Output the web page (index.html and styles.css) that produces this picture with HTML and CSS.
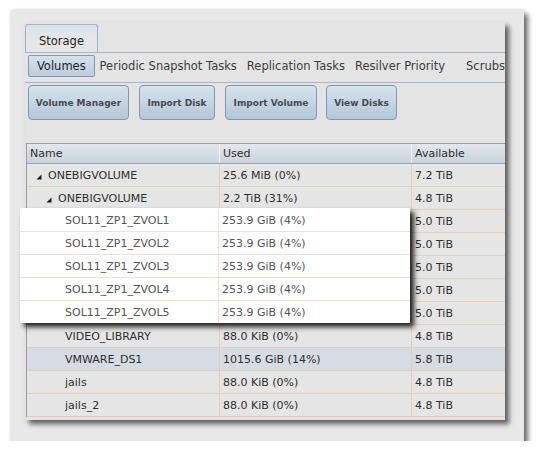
FILE: index.html
```html
<!DOCTYPE html>
<html>
<head>
<meta charset="utf-8">
<link rel="stylesheet" href="styles.css">
</head>
<body>
<div class="frame">
  <div class="panel">
    <div class="tabs"><div class="tab">Storage</div></div>
    <div class="subtabs">
      <div class="vol-btn">Volumes</div>
      <div class="sublink first">Periodic Snapshot Tasks</div>
      <div class="sublink">Replication Tasks</div>
      <div class="sublink">Resilver Priority</div>
      <div class="sublink last">Scrubs</div>
    </div>
    <div class="actions">
      <div class="abtn b-vm">Volume Manager</div>
      <div class="abtn b-id">Import Disk</div>
      <div class="abtn b-iv">Import Volume</div>
      <div class="abtn b-vd">View Disks</div>
    </div>
    <div class="table">
      <div class="row head">
        <div class="cell name">Name</div>
        <div class="cell">Used</div>
        <div class="cell">Available</div>
      </div>
      <div class="row">
        <div class="cell name l1"><svg class="tri" width="6" height="6" viewBox="0 0 6 6"><polygon points="5.5,0.5 5.5,5.5 0.5,5.5"/></svg>ONEBIGVOLUME</div>
        <div class="cell">25.6 MiB (0%)</div>
        <div class="cell">7.2 TiB</div>
      </div>
      <div class="row">
        <div class="cell name l2"><svg class="tri" width="6" height="6" viewBox="0 0 6 6"><polygon points="5.5,0.5 5.5,5.5 0.5,5.5"/></svg>ONEBIGVOLUME</div>
        <div class="cell">2.2 TiB (31%)</div>
        <div class="cell">4.8 TiB</div>
      </div>
      <div class="row">
        <div class="cell name l3">SOL11_ZP1_ZVOL1</div>
        <div class="cell">253.9 GiB (4%)</div>
        <div class="cell">5.0 TiB</div>
      </div>
      <div class="row">
        <div class="cell name l3">SOL11_ZP1_ZVOL2</div>
        <div class="cell">253.9 GiB (4%)</div>
        <div class="cell">5.0 TiB</div>
      </div>
      <div class="row">
        <div class="cell name l3">SOL11_ZP1_ZVOL3</div>
        <div class="cell">253.9 GiB (4%)</div>
        <div class="cell">5.0 TiB</div>
      </div>
      <div class="row">
        <div class="cell name l3">SOL11_ZP1_ZVOL4</div>
        <div class="cell">253.9 GiB (4%)</div>
        <div class="cell">5.0 TiB</div>
      </div>
      <div class="row">
        <div class="cell name l3">SOL11_ZP1_ZVOL5</div>
        <div class="cell">253.9 GiB (4%)</div>
        <div class="cell">5.0 TiB</div>
      </div>
      <div class="row">
        <div class="cell name l3">VIDEO_LIBRARY</div>
        <div class="cell">88.0 KiB (0%)</div>
        <div class="cell">4.8 TiB</div>
      </div>
      <div class="row selected">
        <div class="cell name l3">VMWARE_DS1</div>
        <div class="cell">1015.6 GiB (14%)</div>
        <div class="cell">5.8 TiB</div>
      </div>
      <div class="row">
        <div class="cell name l3">jails</div>
        <div class="cell">88.0 KiB (0%)</div>
        <div class="cell">4.8 TiB</div>
      </div>
      <div class="row">
        <div class="cell name l3">jails_2</div>
        <div class="cell">88.0 KiB (0%)</div>
        <div class="cell">4.8 TiB</div>
      </div>
    </div>
  </div>
  <div class="popup">
    <div class="prow"><div class="pcell pname">SOL11_ZP1_ZVOL1</div><div class="pcell">253.9 GiB (4%)</div></div>
    <div class="prow"><div class="pcell pname">SOL11_ZP1_ZVOL2</div><div class="pcell">253.9 GiB (4%)</div></div>
    <div class="prow"><div class="pcell pname">SOL11_ZP1_ZVOL3</div><div class="pcell">253.9 GiB (4%)</div></div>
    <div class="prow"><div class="pcell pname">SOL11_ZP1_ZVOL4</div><div class="pcell">253.9 GiB (4%)</div></div>
    <div class="prow"><div class="pcell pname">SOL11_ZP1_ZVOL5</div><div class="pcell">253.9 GiB (4%)</div></div>
  </div>
</div>
</body>
</html>
```
FILE: styles.css
```css
* { box-sizing: border-box; }
body {
  margin: 0;
  background: #ffffff;
  font-family: "DejaVu Sans", sans-serif;
  font-size: 11px;
  color: #2e2e2e;
}
.frame {
  position: relative;
  margin: 10px 0 0 11px;
  width: 513px;
  height: 431px;
  background: #e8e8e8;
  box-shadow: 4px 4px 5px rgba(0,0,0,0.55), 0 0 3px rgba(0,0,0,0.18);
  padding: 12px 0 0 14px;
}
.panel {
  width: 480px;
  height: 398px;
  background: #e4e4e4;
  box-shadow: 4px 4px 5px rgba(0,0,0,0.6);
  display: flex;
  flex-direction: column;
  overflow: hidden;
}
.tabs {
  height: 30px;
  padding-top: 2px;
  display: flex;
}
.tab {
  width: 73px;
  height: 28px;
  border: 1px solid #a6b3c0;
  border-bottom: none;
  border-radius: 3px 3px 0 0;
  background: linear-gradient(#d9e2ea, #e6e6e6 45%);
  text-align: center;
  padding-top: 9px;
  line-height: 14px;
  font-size: 11.5px;
  color: #1e1e1e;
}
.subtabs {
  height: 31px;
  border-top: 1px solid #a9b5c1;
  border-bottom: 1px solid #a9b5c1;
  display: flex;
  align-items: flex-start;
  padding: 2px 0 0 3px;
  white-space: nowrap;
  font-size: 11.5px;
}
.vol-btn {
  width: 68px;
  height: 22px;
  border: 1px solid #7e98b1;
  border-radius: 2px;
  background: linear-gradient(#d5e1ec, #bccde0);
  display: flex;
  align-items: center;
  justify-content: center;
  color: #1e1e1e;
}
.sublink {
  line-height: 22px;
  color: #3c3c3c;
  margin-left: 10px;
}
.sublink.first { margin-left: 5px; }
.sublink.last { margin-left: 21px; }
.actions {
  display: flex;
  gap: 10px;
  height: 60px;
  padding: 2px 0 0 3px;
  align-items: flex-start;
}
.abtn {
  height: 35px;
  border: 1px solid #7f98b0;
  border-radius: 4px;
  background: linear-gradient(#d6e2ed, #b4c7d9);
  font-weight: bold;
  font-size: 9px;
  color: #4a4a4a;
  display: flex;
  align-items: center;
  justify-content: center;
  white-space: nowrap;
}
.b-vm { width: 101px; }
.b-id { width: 76px; }
.b-iv { width: 92px; }
.b-vd { width: 71px; margin-left: -1px; }
.table {
  margin-left: 1px;
  border-left: 1px solid #9c9c9c;
}
.row {
  display: grid;
  grid-template-columns: 193px 192px 1fr;
  height: 23px;
  border-bottom: 1px solid #e2cfb9;
  background: #e5e5e5;
}
.row.head {
  height: 21px;
  border-top: 1px solid #a0a0a0;
  border-bottom: 1px solid #9aa4ae;
  background: linear-gradient(#e3e8ed, #c9d2db);
}
.row.selected { background: #d6dce4; }
.cell {
  border-right: 1px solid #e2cfb9;
  padding-left: 3px;
  display: flex;
  align-items: center;
  white-space: nowrap;
  overflow: hidden;
}
.row.head .cell { border-right-color: #eef1f4; padding-left: 3px; }
.cell:last-child { border-right: none; }
.cell.name { padding-left: 4px; }
.cell.l1 { padding-left: 9px; }
.cell.l2 { padding-left: 19px; }
.cell.l3 { padding-left: 38px; }
.tri {
  margin-right: 6px;
  margin-top: 3px;
  fill: #1a1a1a;
}
.popup {
  position: absolute;
  left: 9px;
  top: 198px;
  width: 390px;
  height: 115px;
  background: #ffffff;
  box-shadow: 4px 4px 5px rgba(0,0,0,0.85);
  padding-top: 1px;
}
.prow {
  display: grid;
  grid-template-columns: 199px 1fr;
  height: 23px;
  border-bottom: 1px solid #efe3d5;
}
.prow:last-child { border-bottom: none; height: 22px; }
.pcell {
  display: flex;
  align-items: center;
  padding-left: 3px;
  color: #555555;
  white-space: nowrap;
}
.pcell.pname {
  padding-left: 45px;
  border-right: 1px solid #efe3d5;
}
```
